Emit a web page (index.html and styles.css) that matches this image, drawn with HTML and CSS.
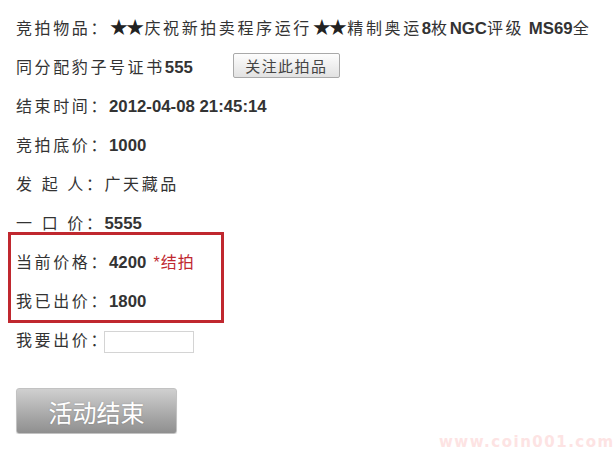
FILE: index.html
```html
<!DOCTYPE html>
<html lang="zh-CN">
<head>
	<meta charset="UTF-8" />
	<title>竞拍详情</title>
	<link rel="stylesheet" href="styles.css">
</head>
<body>
	<div class="auction">
		<div class="row title">竞拍物品：<span class="star">★★</span>庆祝新拍卖程序运行<span class="star">★★</span>精制奥运<span class="num">8</span>枚<span class="num">NGC</span>评级<span class="num"> MS69</span>全同分配豹子号证书<span class="num">555</span><button class="watch-btn">关注此拍品</button></div>
		<div class="row">结束时间：<span class="num">2012-04-08 21:45:14</span></div>
		<div class="row">竞拍底价：<span class="num">1000</span></div>
		<div class="row">发 起 人：广天藏品</div>
		<div class="row">一 口 价：<span class="num">5555</span></div>
		<div class="row">当前价格：<span class="num">4200</span> <span class="ended">*结拍</span></div>
		<div class="row">我已出价：<span class="num">1800</span></div>
		<div class="row">我要出价：<input class="bid-input" type="text" /></div>
		<div class="actions">
			<button class="end-btn">活动结束</button>
		</div>
		<div class="highlight"></div>
	</div>
	<div class="watermark">www.coin001.com</div>
</body>
</html>
```

FILE: styles.css
```css
body, html {
	margin: 0;
	background-color: white;
	font-family: "Liberation Sans", "Noto Sans CJK SC", sans-serif;
	color: #333;
}
.auction {
	position: relative;
	width: 577px;
	padding: 8px 0 0 16px;
}
.row {
	font-size: 16px;
	letter-spacing: 2.6px;
	line-height: 39px;
}
.num {
	font-weight: bold;
	font-size: 16.8px;
	letter-spacing: 0;
}
.star {
	font-family: "DejaVu Sans", sans-serif;
	font-size: 22px;
	letter-spacing: -3.5px;
	margin-right: 3px;
	color: #222;
	vertical-align: -1px;
}
.watch-btn {
	margin-left: 40px;
	width: 107px;
	height: 25px;
	padding: 0;
	font-family: inherit;
	font-size: 15px;
	letter-spacing: 1.4px;
	color: #444;
	background: linear-gradient(#fdfdfd, #e2e2e2);
	border: 1px solid #a9a9a9;
	border-radius: 2px;
	vertical-align: 1px;
}
.ended {
	color: #c0282f;
	letter-spacing: 1px;
}
.bid-input {
	width: 84px;
	height: 18px;
	padding: 1px 2px;
	border: 1px solid #d4d4d4;
	vertical-align: middle;
	margin-left: -5px;
}
.actions {
	padding-top: 28px;
}
.end-btn {
	width: 161px;
	height: 46px;
	padding: 0;
	font-family: inherit;
	font-size: 24px;
	color: white;
	text-shadow: 0 0 2px rgba(0, 0, 0, 0.2);
	background: linear-gradient(#d0d0d0, #a8a8a8 60%, #8f8f8f);
	border: 1px solid #c2c2c2;
	border-radius: 3px;
	box-shadow: 0 1px 1px rgba(0, 0, 0, 0.1);
}
.highlight {
	position: absolute;
	left: 8px;
	top: 232px;
	width: 210px;
	height: 85px;
	border: 3px solid #c0282f;
}
.watermark {
	position: absolute;
	left: 439px;
	top: 434px;
	font-family: "DejaVu Sans", sans-serif;
	font-weight: bold;
	font-size: 15px;
	line-height: 17px;
	letter-spacing: 1.5px;
	color: #fde3e3;
}
```
